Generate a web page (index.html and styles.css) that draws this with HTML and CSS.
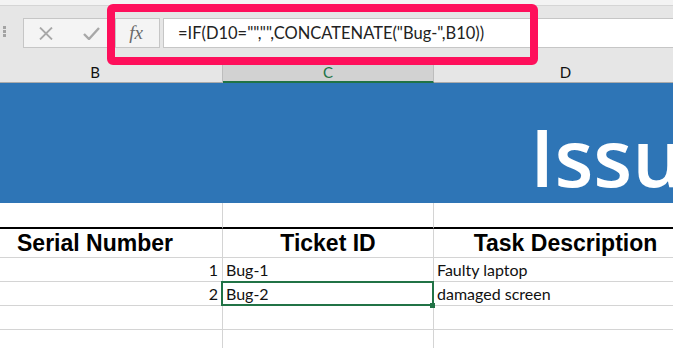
FILE: index.html
```html
<!DOCTYPE html>
<html>

<head>
    <title>Issue Tracker</title>
    <link rel="stylesheet" href="styles.css">
</head>

<body>
    <div class="ribbon-edge"></div>

    <div class="formula-bar">
        <div class="grip"><span></span><span></span><span></span></div>
        <div class="cmd-box">
            <svg class="icon" width="16" height="13" viewBox="0 0 16 13">
                <path d="M2 0.5 L14 12.5 M14 0.5 L2 12.5" stroke="#a8a8a8" stroke-width="1.8" fill="none" />
            </svg>
            <svg class="icon" width="17" height="13" viewBox="0 0 17 13">
                <path d="M1 7 L6 12 L16 1" stroke="#a8a8a8" stroke-width="2.4" fill="none" />
            </svg>
        </div>
        <div class="fx-box"><span class="fx">fx</span></div>
        <div class="formula-input">=IF(D10="","",CONCATENATE("Bug-",B10))</div>
    </div>

    <div class="col-headers">
        <div class="col-head">B</div>
        <div class="col-head selected">C</div>
        <div class="col-head">D</div>
    </div>

    <div class="banner">
        <span class="banner-title">Issue Tracker</span>
    </div>

    <div class="sheet">
        <div class="cell blank"></div>
        <div class="cell blank"></div>
        <div class="cell blank"></div>

        <div class="cell head">Serial Number</div>
        <div class="cell head">Ticket ID</div>
        <div class="cell head">Task Description</div>

        <div class="cell num">1</div>
        <div class="cell">Bug-1</div>
        <div class="cell">Faulty laptop</div>

        <div class="cell num">2</div>
        <div class="cell active">Bug-2</div>
        <div class="cell">damaged screen</div>

        <div class="cell"></div>
        <div class="cell"></div>
        <div class="cell"></div>

        <div class="cell"></div>
        <div class="cell"></div>
        <div class="cell"></div>
    </div>

    <!-- annotation box round the formula -->
    <div class="highlight"></div>
</body>

</html>
```

FILE: styles.css
```css
body {
    margin: 0;
    width: 673px;
    height: 348px;
    overflow: hidden;
    background-color: #ffffff;
    font-family: Lato, "Liberation Sans", sans-serif;
    color: #000000;
}

.ribbon-edge {
    height: 5px;
    background-color: #f3f3f3;
    border-bottom: 1px solid #d5d5d5;
}

.formula-bar {
    height: 53px;
    box-sizing: border-box;
    padding-top: 12px;
    display: flex;
    align-items: flex-start;
    background-color: #e6e6e6;
}

.grip {
    width: 23px;
    display: flex;
    flex-direction: column;
    gap: 1px;
    padding: 8px 0 0 3px;
    box-sizing: border-box;
}

.grip span {
    width: 3px;
    height: 3px;
    background-color: #a3a3a3;
}

.cmd-box {
    width: 90px;
    height: 30px;
    box-sizing: border-box;
    border: 1px solid #c6c6c6;
    background-color: #f4f4f4;
    display: flex;
    align-items: center;
    gap: 29px;
    padding-left: 14px;
    margin-right: 2px;
}

.fx-box {
    width: 45px;
    height: 30px;
    box-sizing: border-box;
    border: 1px solid #c6c6c6;
    background-color: #f4f4f4;
    display: flex;
    align-items: center;
    justify-content: center;
    margin-right: 3px;
}

.fx {
    font-family: "Liberation Serif", serif;
    font-style: italic;
    font-size: 19px;
    color: #6a6a6a;
    padding-right: 3px;
}

.formula-input {
    flex: 1;
    height: 30px;
    box-sizing: border-box;
    border: 1px solid #c6c6c6;
    border-right: 0;
    background-color: #ffffff;
    padding-left: 14px;
    font-size: 16.5px;
    line-height: 28px;
    white-space: nowrap;
    color: #222222;
}

.col-headers {
    display: grid;
    grid-template-columns: 255px 211px 264px;
    margin-left: -32px;
    background-color: #e6e6e6;
}

.col-head {
    height: 24px;
    box-sizing: border-box;
    border-right: 1px solid #bdbdbd;
    border-bottom: 1px solid #ababab;
    text-align: center;
    font-size: 15px;
    line-height: 26px;
    color: #111111;
}

.col-head.selected {
    background-color: #d2d2d2;
    border-bottom: 2px solid #217346;
    color: #217346;
}

.banner {
    height: 120px;
    box-sizing: border-box;
    background-color: #2e75b6;
    padding: 33px 0 0 530px;
    overflow: hidden;
    white-space: nowrap;
}

.banner-title {
    font-family: "Open Sans", sans-serif;
    font-size: 80px;
    font-weight: 600;
    line-height: 80px;
    color: #ffffff;
}

.sheet {
    display: grid;
    grid-template-columns: 255px 211px 264px;
    margin-left: -32px;
}

.cell {
    height: 24px;
    box-sizing: border-box;
    border-right: 1px solid #d4d4d4;
    border-bottom: 1px solid #d4d4d4;
    padding: 0 3px;
    font-size: 16px;
    line-height: 23px;
    white-space: nowrap;
    color: #111111;
}

.cell.blank {
    height: 26px;
    border-bottom: 2px solid #000000;
}

.cell.head {
    height: 29px;
    padding-top: 1px;
    text-align: center;
    font-family: "Liberation Sans", Arial, sans-serif;
    font-weight: bold;
    font-size: 23px;
    line-height: 27px;
    color: #000000;
}

.cell.num {
    text-align: right;
    padding-right: 4px;
}

.cell.active {
    position: relative;
}

/* selection frame and fill handle */
.cell.active::after {
    content: "";
    position: absolute;
    top: -1px;
    left: -2px;
    right: -1px;
    bottom: -1px;
    border: 2px solid #217346;
}

.cell.active::before {
    content: "";
    position: absolute;
    right: -2px;
    bottom: -3px;
    width: 5px;
    height: 5px;
    background-color: #217346;
    z-index: 1;
}

.highlight {
    position: absolute;
    top: 4px;
    left: 107px;
    width: 431px;
    height: 61px;
    box-sizing: border-box;
    border: 8px solid #fe0f5b;
    border-radius: 6px;
}
```
